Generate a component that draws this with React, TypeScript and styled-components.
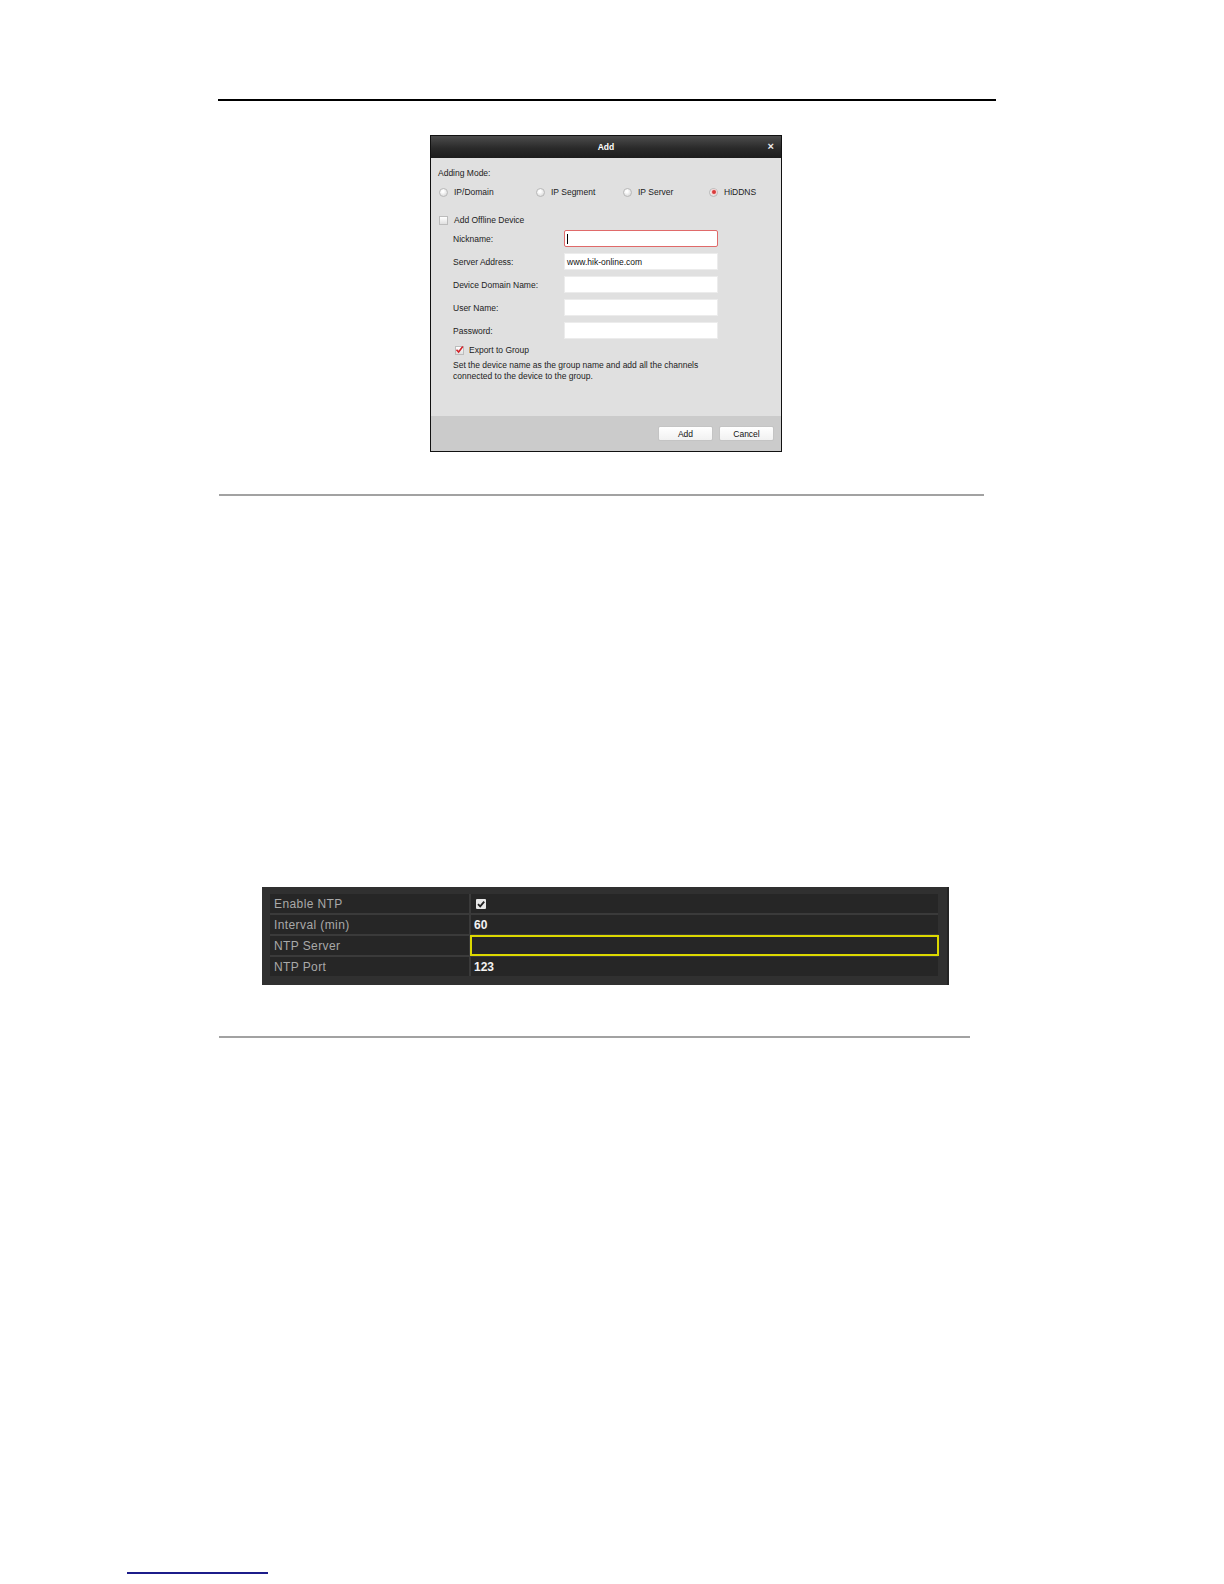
import React from 'react';
import styled, { createGlobalStyle } from 'styled-components';

const GlobalStyle = createGlobalStyle`
  html, body {
    margin: 0;
    padding: 0;
    background: #ffffff;
  }
  body {
    font-family: "Liberation Sans", Arial, sans-serif;
  }
`;

const radioModes = [
  { label: 'IP/Domain', width: 96, checked: false },
  { label: 'IP Segment', width: 86, checked: false },
  { label: 'IP Server', width: 85, checked: false },
  { label: 'HiDDNS', width: 70, checked: true },
];

const formFields = [
  { label: 'Nickname:', value: '', focused: true },
  { label: 'Server Address:', value: 'www.hik-online.com', focused: false },
  { label: 'Device Domain Name:', value: '', focused: false },
  { label: 'User Name:', value: '', focused: false },
  { label: 'Password:', value: '', focused: false },
];

const ntpRows = [
  { label: 'Enable NTP', value: 'check' },
  { label: 'Interval (min)', value: '60' },
  { label: 'NTP Server', value: '', active: true },
  { label: 'NTP Port', value: '123' },
];

const App = (): JSX.Element => {
  return (
    <Page>
      <GlobalStyle />
      <TopRule />

      <Dialog>
        <DialogHeader>
          <DialogTitle>Add</DialogTitle>
          <CloseButton>×</CloseButton>
        </DialogHeader>
        <DialogBody>
          <SmallText>Adding Mode:</SmallText>
          <RadioRow>
            {radioModes.map((m) => (
              <RadioOption key={m.label} $width={m.width}>
                <Radio $checked={m.checked} />
                <SmallText>{m.label}</SmallText>
              </RadioOption>
            ))}
          </RadioRow>
          <OfflineRow>
            <Checkbox />
            <SmallText>Add Offline Device</SmallText>
          </OfflineRow>
          <FormGrid>
            {formFields.map((f) => (
              <FormRow key={f.label}>
                <FieldLabel>{f.label}</FieldLabel>
                <FieldInput $focused={f.focused}>
                  {f.focused ? <Caret /> : f.value}
                </FieldInput>
              </FormRow>
            ))}
          </FormGrid>
          <ExportRow>
            <Checkbox $checked>
              <svg width="9" height="9" viewBox="0 0 9 9">
                <path d="M1.5 4.8 L3.6 7 L7.8 1.6" fill="none" stroke="#d2232a" strokeWidth="1.6" />
              </svg>
            </Checkbox>
            <SmallText>Export to Group</SmallText>
          </ExportRow>
          <Description>
            Set the device name as the group name and add all the channels
            <br />
            connected to the device to the group.
          </Description>
        </DialogBody>
        <DialogFooter>
          <DialogButton>Add</DialogButton>
          <DialogButton>Cancel</DialogButton>
        </DialogFooter>
      </Dialog>

      <SectionRule $width={765} $top={42} />

      <NtpPanel>
        <NtpTable>
          {ntpRows.map((r) => (
            <React.Fragment key={r.label}>
              <NtpLabel>{r.label}</NtpLabel>
              <NtpValue $active={r.active}>
                {r.value === 'check' ? (
                  <NtpCheck>
                    <svg width="10" height="10" viewBox="0 0 10 10">
                      <path d="M2 5.2 L4.2 7.4 L8.2 2.6" fill="none" stroke="#222" strokeWidth="1.8" />
                    </svg>
                  </NtpCheck>
                ) : (
                  r.value
                )}
              </NtpValue>
            </React.Fragment>
          ))}
        </NtpTable>
      </NtpPanel>

      <SectionRule $width={751} $top={51} />

      <FooterLink />
    </Page>
  );
};

export default App;

const Page = styled.div`
  display: flex;
  flex-direction: column;
  align-items: flex-start;
`;

const TopRule = styled.div`
  margin: 99px 0 0 218px;
  width: 778px;
  height: 2px;
  background: #000;
`;

const Dialog = styled.div`
  margin: 34px 0 0 430px;
  width: 350px;
  border: 1px solid #111;
  display: flex;
  flex-direction: column;
  background: #e0e0e0;
`;

const DialogHeader = styled.div`
  height: 22px;
  background: linear-gradient(#4c4c4c, #2a2a2a 55%, #1c1c1c);
  display: flex;
  align-items: center;
  justify-content: center;
  position: relative;
`;

const DialogTitle = styled.span`
  color: #fff;
  font-weight: bold;
  font-size: 8.5px;
`;

const CloseButton = styled.span`
  position: absolute;
  right: 7px;
  top: 4px;
  color: #eee;
  font-weight: bold;
  font-size: 11px;
  line-height: 12px;
`;

const DialogBody = styled.div`
  height: 258px;
  padding: 9px 0 0 7px;
  box-sizing: border-box;
  display: flex;
  flex-direction: column;
`;

const SmallText = styled.span`
  font-size: 8.5px;
  line-height: 12px;
  color: #222;
  white-space: nowrap;
`;

const RadioRow = styled.div`
  display: flex;
  margin-top: 7px;
  height: 12px;
  align-items: center;
`;

const RadioOption = styled.div<{ $width: number }>`
  width: ${(p) => p.$width}px;
  display: flex;
  align-items: center;
  gap: 6px;
  padding-left: 1px;
`;

const Radio = styled.span<{ $checked?: boolean }>`
  width: 9px;
  height: 9px;
  border-radius: 50%;
  box-sizing: border-box;
  border: 1px solid #b9b9b9;
  background: radial-gradient(circle at 40% 35%, #ffffff 15%, #cfcfcf);
  display: flex;
  align-items: center;
  justify-content: center;

  &::after {
    content: '';
    width: 4px;
    height: 4px;
    border-radius: 50%;
    background: ${(p) => (p.$checked ? '#d83a3a' : 'transparent')};
    box-shadow: ${(p) => (p.$checked ? '0 0 0 1px #f6d0d0' : 'none')};
  }
`;

const OfflineRow = styled.div`
  display: flex;
  align-items: center;
  gap: 6px;
  margin-top: 16px;
  padding-left: 1px;
`;

const Checkbox = styled.span<{ $checked?: boolean }>`
  width: 9px;
  height: 9px;
  box-sizing: border-box;
  border: 1px solid #bcbcbc;
  background: linear-gradient(#ffffff, #e0e0e0);
  display: flex;
  align-items: center;
  justify-content: center;
  overflow: visible;

  svg {
    flex-shrink: 0;
    margin-top: -1px;
  }
`;

const FormGrid = styled.div`
  display: flex;
  flex-direction: column;
  gap: 6px;
  margin-top: 4px;
  padding-left: 15px;
`;

const FormRow = styled.div`
  display: flex;
  align-items: center;
  height: 17px;
`;

const FieldLabel = styled.span`
  width: 111px;
  font-size: 8.5px;
  color: #222;
  white-space: nowrap;
`;

const FieldInput = styled.div<{ $focused?: boolean }>`
  width: 154px;
  height: 17px;
  box-sizing: border-box;
  background: #fff;
  border: 1px solid ${(p) => (p.$focused ? '#e06a6a' : '#ececec')};
  border-radius: ${(p) => (p.$focused ? '2px' : '0')};
  font-size: 8.5px;
  color: #111;
  display: flex;
  align-items: center;
  padding-left: 2px;
`;

const Caret = styled.span`
  width: 1px;
  height: 10px;
  background: #000;
`;

const ExportRow = styled.div`
  display: flex;
  align-items: center;
  gap: 5px;
  margin-top: 5px;
  padding-left: 17px;
`;

const Description = styled.div`
  margin-top: 4px;
  padding-left: 15px;
  font-size: 8.5px;
  line-height: 11px;
  color: #222;
`;

const DialogFooter = styled.div`
  height: 35px;
  background: #cbcbcb;
  display: flex;
  align-items: center;
  justify-content: flex-end;
  gap: 6px;
  padding-right: 7px;
`;

const DialogButton = styled.button`
  width: 55px;
  height: 15px;
  padding: 0;
  border: 1px solid #c4c4c4;
  border-radius: 2px;
  background: linear-gradient(#ffffff, #f1f1f1);
  font-family: "Liberation Sans", Arial, sans-serif;
  font-size: 8.5px;
  color: #111;
`;

const SectionRule = styled.div<{ $width: number; $top: number }>`
  margin: ${(p) => p.$top}px 0 0 219px;
  width: ${(p) => p.$width}px;
  height: 2px;
  background: #a2a2a2;
`;

const NtpPanel = styled.div`
  margin: 391px 0 0 262px;
  width: 687px;
  box-sizing: border-box;
  padding: 7px 9px 9px 8px;
  background: #303030;
  border-right: 2px solid #242424;
`;

const NtpTable = styled.div`
  display: grid;
  grid-template-columns: 199px 1fr;
  grid-auto-rows: 19px;
  gap: 2px 2px;
  background: #3a3a3a;
  border-radius: 3px;
`;

const NtpLabel = styled.div`
  background: #262626;
  color: #a9a9a9;
  font-size: 12px;
  letter-spacing: 0.4px;
  display: flex;
  align-items: center;
  padding-left: 4px;
`;

const NtpValue = styled.div<{ $active?: boolean }>`
  background: #262626;
  color: #f2f2f2;
  font-size: 12px;
  font-weight: bold;
  display: flex;
  align-items: center;
  padding-left: 3px;
  box-sizing: border-box;
  ${(p) =>
    p.$active
      ? `
    border: 2px solid #dcd800;
    margin: -1px;
  `
      : ''}
`;

const NtpCheck = styled.span`
  width: 10px;
  height: 10px;
  background: #e8e8e8;
  border-radius: 1px;
  display: flex;
  align-items: center;
  justify-content: center;
  margin-left: 2px;
`;

const FooterLink = styled.div`
  margin: 534px 0 0 127px;
  width: 141px;
  height: 2px;
  background: #1c1c8a;
`;
